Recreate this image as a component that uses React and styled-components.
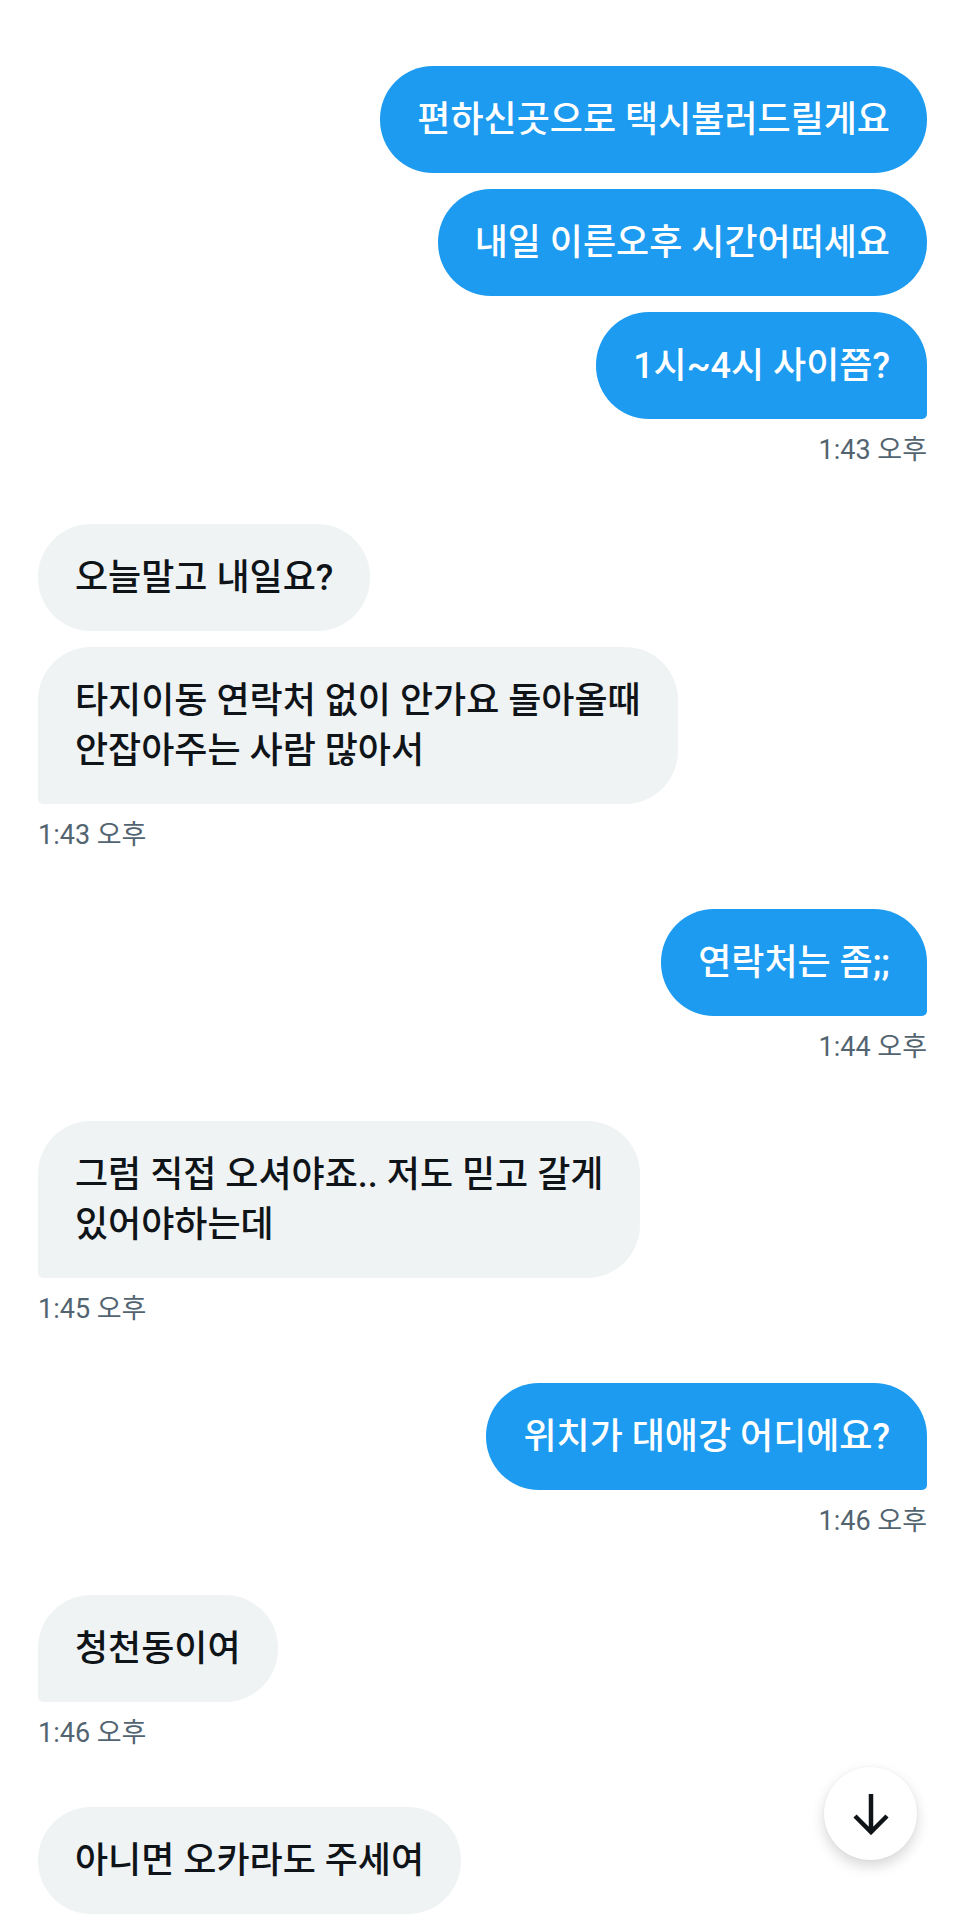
import React from 'react';
import styled, { createGlobalStyle } from 'styled-components';

const GlobalStyle = createGlobalStyle`
  html, body {
    margin: 0;
    padding: 0;
    background: #ffffff;
  }
  body {
    height: 1920px;
    overflow: hidden;
    font-family: Roboto, "Noto Sans CJK KR", "Noto Sans", sans-serif;
    -webkit-font-smoothing: antialiased;
  }
`;

const Conversation = styled.div`
  display: flex;
  flex-direction: column;
  padding: 66px 38px 0;
`;

const Group = styled.div`
  display: flex;
  flex-direction: column;
  align-items: ${(p) => (p.$mine ? 'flex-end' : 'flex-start')};
  gap: 16px;

  & + & {
    margin-top: 59px;
  }
`;

const Bubble = styled.div`
  background: ${(p) => (p.$mine ? '#1d9bf0' : '#eff3f4')};
  color: ${(p) => (p.$mine ? '#ffffff' : '#0f1419')};
  padding: 28.5px 37px;
  border-radius: 53px;
  font-size: 36px;
  font-weight: 500;
  line-height: 50px;
  white-space: pre-line;

  ${(p) =>
    p.$tail &&
    (p.$mine
      ? 'border-bottom-right-radius: 5px;'
      : 'border-bottom-left-radius: 5px;')}
`;

const Time = styled.div`
  font-size: 27px;
  line-height: 30px;
  color: #536471;
`;

const ScrollButton = styled.button`
  position: fixed;
  right: 48px;
  bottom: 60px;
  width: 93px;
  height: 93px;
  border: none;
  border-radius: 50%;
  background: #ffffff;
  box-shadow: 0 6px 14px rgba(0, 0, 0, 0.16), 0 0 3px rgba(0, 0, 0, 0.06);
  display: flex;
  align-items: center;
  justify-content: center;
  padding: 0;
`;

const groups = [
  {
    mine: true,
    texts: ['편하신곳으로 택시불러드릴게요', '내일 이른오후 시간어떠세요', '1시~4시 사이쯤?'],
    time: '1:43 오후',
  },
  {
    mine: false,
    texts: ['오늘말고 내일요?', '타지이동 연락처 없이 안가요 돌아올때\n안잡아주는 사람 많아서'],
    time: '1:43 오후',
  },
  { mine: true, texts: ['연락처는 좀;;'], time: '1:44 오후' },
  {
    mine: false,
    texts: ['그럼 직접 오셔야죠.. 저도 믿고 갈게\n있어야하는데'],
    time: '1:45 오후',
  },
  { mine: true, texts: ['위치가 대애강 어디에요?'], time: '1:46 오후' },
  { mine: false, texts: ['청천동이여'], time: '1:46 오후' },
  { mine: false, texts: ['아니면 오카라도 주세여'] },
];

const ArrowDown = () => (
  <svg width="36" height="42" viewBox="0 0 36 42" fill="none">
    <path
      d="M18 1V39M2 23L18 39L34 23"
      stroke="#0f1419"
      strokeWidth="4.5"
      strokeLinejoin="miter"
    />
  </svg>
);

export default function App() {
  return (
    <>
      <GlobalStyle />
      <Conversation>
        {groups.map((g, i) => (
          <Group key={i} $mine={g.mine}>
            {g.texts.map((t, j) => (
              <Bubble key={j} $mine={g.mine} $tail={j === g.texts.length - 1 && !!g.time}>
                {t}
              </Bubble>
            ))}
            {g.time && <Time>{g.time}</Time>}
          </Group>
        ))}
      </Conversation>
      <ScrollButton aria-label="아래로 스크롤">
        <ArrowDown />
      </ScrollButton>
    </>
  );
}
